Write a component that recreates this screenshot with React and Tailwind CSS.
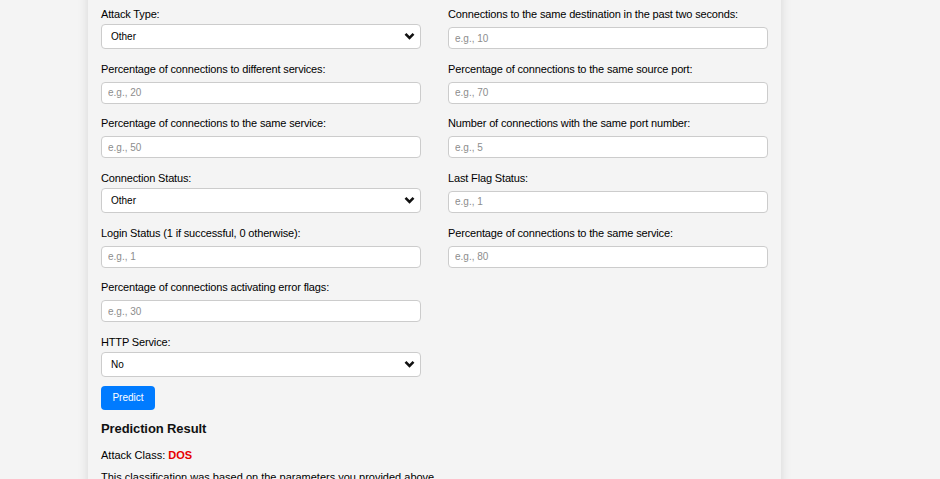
import React from 'react';

const leftFields = [
    { label: 'Attack Type:', type: 'select', value: 'Other' },
    { label: 'Percentage of connections to different services:', placeholder: 'e.g., 20' },
    { label: 'Percentage of connections to the same service:', placeholder: 'e.g., 50' },
    { label: 'Connection Status:', type: 'select', value: 'Other' },
    { label: 'Login Status (1 if successful, 0 otherwise):', placeholder: 'e.g., 1' },
    { label: 'Percentage of connections activating error flags:', placeholder: 'e.g., 30' },
    { label: 'HTTP Service:', type: 'select', value: 'No' },
];

const rightFields = [
    { label: 'Connections to the same destination in the past two seconds:', placeholder: 'e.g., 10' },
    { label: 'Percentage of connections to the same source port:', placeholder: 'e.g., 70' },
    { label: 'Number of connections with the same port number:', placeholder: 'e.g., 5' },
    { label: 'Last Flag Status:', placeholder: 'e.g., 1' },
    { label: 'Percentage of connections to the same service:', placeholder: 'e.g., 80' },
];

const Chevron = () => (
    <svg className="absolute right-[6px] top-1/2 -translate-y-1/2 h-[8px] w-[11px] pointer-events-none" viewBox="0 0 11 8">
        <path d="M1.5 1.8 L5.5 5.8 L9.5 1.8" fill="none" stroke="#111" strokeWidth="2.6" />
    </svg>
);

const Field = ({ field }) => (
    <div className="flex flex-col h-[54.67px] pt-[6px]">
        <label className="text-[11px] leading-[16px] tracking-[-0.15px] text-black whitespace-nowrap">{field.label}</label>
        {field.type === 'select' ? (
            <div className="relative mt-[1px]">
                <select
                    defaultValue={field.value}
                    className="appearance-none w-full h-[25px] pl-[9px] bg-white border border-[#ccc] rounded-[4px] text-[10px] text-black outline-none"
                >
                    <option>{field.value}</option>
                </select>
                <Chevron />
            </div>
        ) : (
            <input
                type="text"
                placeholder={field.placeholder}
                className="mt-[5px] w-full h-[22px] px-[6px] bg-white border border-[#ccc] rounded-[4px] text-[10px] placeholder:text-[#8d8d8d] outline-none"
            />
        )}
    </div>
);

export default function App() {
    return (
        <div className="min-h-screen h-[479px] overflow-hidden bg-[#f4f4f4] font-['Liberation_Sans',Arial,sans-serif]">
            <div className="ml-[88px] w-[693px] -mt-[20px] pt-[20px] px-[13px] bg-[#f4f4f4] shadow-[0_0_10px_rgba(0,0,0,0.12)] min-h-[540px]">
                <div className="grid grid-cols-[320px_320px] gap-x-[27px]">
                    <div className="flex flex-col">
                        {leftFields.map((f, i) => <Field key={i} field={f} />)}
                    </div>
                    <div className="flex flex-col">
                        {rightFields.map((f, i) => <Field key={i} field={f} />)}
                    </div>
                </div>

                <button className="mt-[3px] w-[54px] h-[24px] bg-[#007bff] text-white text-[10px] rounded-[4px]">
                    Predict
                </button>

                <h3 className="mt-[10px] text-[13px] leading-[18px] tracking-[-0.1px] font-bold text-[#111]">Prediction Result</h3>
                <p className="mt-[10px] text-[11px] leading-[14px] text-black">
                    Attack Class: <span className="font-bold text-[#e60000]">DOS</span>
                </p>
                <p className="mt-[8px] text-[11px] leading-[14px] text-black">
                    This classification was based on the parameters you provided above.
                </p>
            </div>
        </div>
    );
}
